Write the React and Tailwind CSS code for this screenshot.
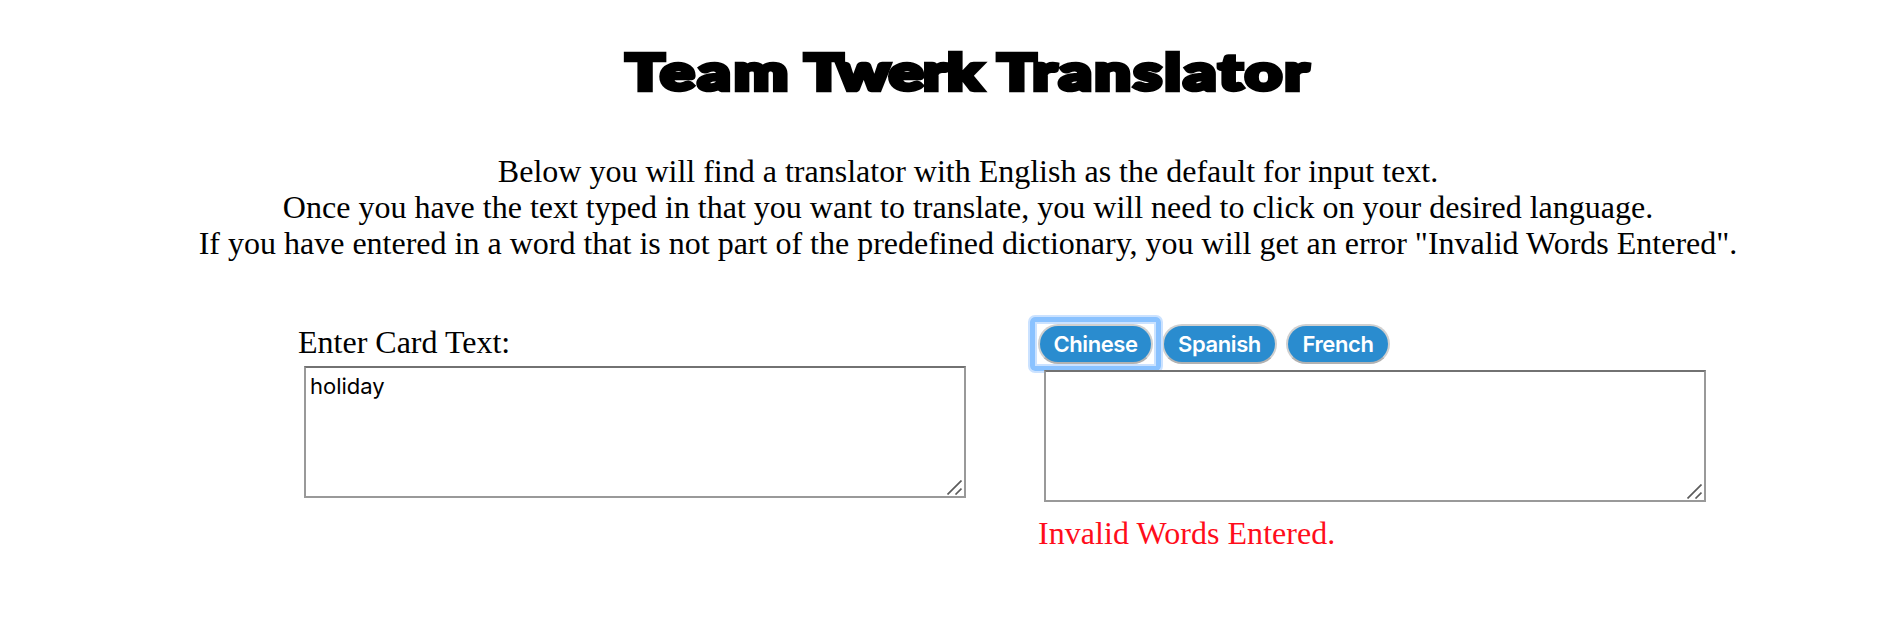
function Grip() {
  return (
    <svg className="absolute right-1 bottom-[3px] h-[15px] w-[15px]" viewBox="0 0 15 15" fill="none" stroke="#5c5c5c" strokeWidth="1.7">
      <path d="M0.5 14.5 L14.5 0.5 M8.5 14.5 L14.5 8.5" />
    </svg>
  );
}

function TextBox({ value }) {
  return (
    <div className="relative h-[132px] w-[662px]">
      <textarea
        defaultValue={value}
        spellCheck={false}
        className="block h-full w-full resize-none border-2 border-[#999] border-t-[#727272] bg-white px-1 py-1 font-[Inter,sans-serif] text-[22px] leading-[28px] tracking-[0px] text-black outline-none"
      />
      <Grip />
    </div>
  );
}

const pill =
  "flex h-[40px] items-center justify-center rounded-full border-2 border-[#d0d0d0] border-b-[#b2b2b2] bg-[#2a8ccf] font-[Inter,sans-serif] text-[22px] leading-none font-semibold text-white";

export default function App() {
  return (
    <main className="h-[620px] w-[1878px] overflow-hidden bg-white font-['Liberation_Serif',serif] text-[32px] leading-[36px] text-black">
      <header className="w-[1936px] pt-[39px] text-center">
        <h1 className="h-[64px] scale-x-[1.28] pl-px font-[Lato,sans-serif] text-[50px] leading-[64px] font-black whitespace-nowrap [-webkit-text-stroke:4.5px_black]">
          <span className="tracking-[2.6px]">Team</span>{" "}
          <span className="tracking-[0px]">Twerk</span>{" "}
          <span className="tracking-[2.1px]">Translator</span>
        </h1>
        <p className="mt-[50px] whitespace-nowrap">
          Below you will find a translator with English as the default for input text.
          <br />
          Once you have the text typed in that you want to translate, you will need to click on your desired language.
          <br />
          If you have entered in a word that is not part of the predefined dictionary, you will get an error "Invalid Words Entered".
        </p>
      </header>
      <div className="grid grid-cols-[740px_680px] pt-[53px] pl-[298px]">
        <section className="pt-[10px]">
          <label className="block h-[42px]">Enter Card Text:</label>
          <div className="pl-[6px]">
            <TextBox value="holiday" />
          </div>
        </section>
        <section>
          <div className="flex h-[56px] pt-[10px]">
            <button className={`${pill} relative w-[115px] tracking-[-0.4px]`}>
              Chinese
              <span className="pointer-events-none absolute -inset-x-[12px] -top-[11px] -bottom-[11px] rounded-[7px] border-2 border-[#cbe2ff]">
                <span className="block h-full rounded-[5px] border-[5px] border-[#8ac2ff]">
                  <span className="block h-full border-2 border-[#cbe2ff]" />
                </span>
              </span>
            </button>
            <button className={`${pill} ml-[9px] w-[115px] tracking-[-0.4px]`}>Spanish</button>
            <button className={`${pill} ml-[9px] w-[104px] tracking-[-0.4px]`}>French</button>
          </div>
          <div className="relative pl-[6px]">
            <TextBox value="" />
          </div>
          <p className="pt-[13px] tracking-[0.05px] text-[#ff0d1b]">Invalid Words Entered.</p>
        </section>
      </div>
    </main>
  );
}
